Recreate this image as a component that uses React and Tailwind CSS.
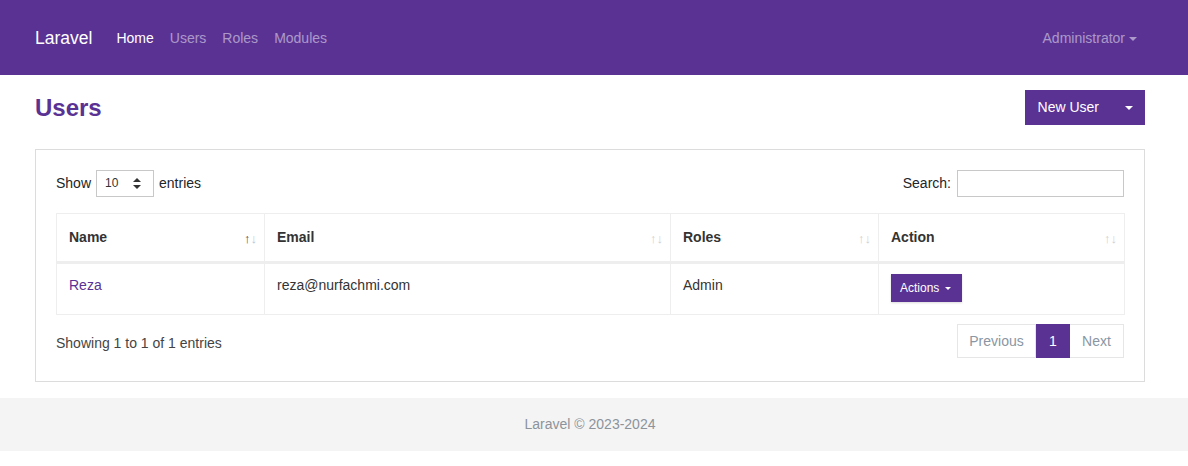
import React from "react";

function Caret({ size = 4, className = "" }) {
  return (
    <span
      className={"inline-block align-middle " + className}
      style={{
        width: 0,
        height: 0,
        borderLeft: `${size}px solid transparent`,
        borderRight: `${size}px solid transparent`,
        borderTop: `${size}px solid currentColor`,
      }}
    />
  );
}

function SortIcons({ active }) {
  return (
    <span className="absolute right-[7px] top-1/2 -translate-y-1/2 flex text-[13px] leading-none">
      <span className={active ? "text-[#5a4848]" : "text-[#cfcfcf]"}>↑</span>
      <span className={active ? "text-[#b9c6d6]" : "text-[#cfcfcf]"}>↓</span>
    </span>
  );
}

export default function App() {
  const th = "relative border border-[#eee] border-b-[3px] border-b-[#eee] px-3 py-3 text-left font-bold text-[#333] align-middle";
  const td = "border border-[#eee] px-3 py-3 align-top text-[#333]";
  return (
    <div className="min-h-[466px] bg-white font-['Liberation_Sans',Arial,sans-serif] text-[14px] leading-[21px] text-[#212529]">
      <nav className="h-[75px] bg-[#5a3294] pl-[35px] pr-[43px] pt-[2px] flex items-center">
        <span className="text-[17.5px] text-white mr-4">Laravel</span>
        <ul className="flex">
          <li className="px-2 text-white">Home</li>
          <li className="px-2 text-white/50">Users</li>
          <li className="px-2 text-white/50">Roles</li>
          <li className="px-2 text-white/50">Modules</li>
        </ul>
        <div className="ml-auto px-2 text-white/50 flex items-center gap-[4px]">
          <span>Administrator</span>
          <Caret size={4} className="mt-[1px]" />
        </div>
      </nav>

      <main className="pl-[35px] pr-[43px]">
        <div className="flex justify-between items-center pt-[15px]">
          <h1 className="text-[24px] font-bold text-[#5a3294] leading-[35px]">Users</h1>
          <div className="flex h-[35px] bg-[#5a3294] text-white">
            <span className="pl-[13px] pr-[13px] flex items-center">New User</span>
            <span className="w-[33px] flex items-center justify-center">
              <Caret size={4} />
            </span>
          </div>
        </div>

        <div className="mt-[24px] border border-[#dcdcdc] px-5 pt-5 pb-[23px]">
          <div className="flex justify-between items-center h-[27px]">
            <div className="flex items-center">
              <span className="mr-[5px]">Show</span>
              <div className="w-[58px] h-[27px] border border-[#c8c8c8] flex items-center justify-between pl-[8px] pr-[12px] text-[12px] text-[#333]">
                <span>10</span>
                <svg width="8" height="11" viewBox="0 0 8 11">
                  <path d="M4 0 L8 4 L0 4 Z" fill="#333" />
                  <path d="M0 7 L8 7 L4 11 Z" fill="#333" />
                </svg>
              </div>
              <span className="ml-[5px]">entries</span>
            </div>
            <div className="flex items-center">
              <span className="mr-[6px]">Search:</span>
              <div className="w-[167px] h-[27px] border border-[#c8c8c8]" />
            </div>
          </div>

          <table className="mt-4 w-full table-fixed border-collapse">
            <colgroup>
              <col style={{ width: 208 }} />
              <col style={{ width: 406 }} />
              <col style={{ width: 208 }} />
              <col style={{ width: 246 }} />
            </colgroup>
            <thead>
              <tr className="h-[49px]">
                <th className={th}>Name<SortIcons active /></th>
                <th className={th}>Email<SortIcons /></th>
                <th className={th}>Roles<SortIcons /></th>
                <th className={th}>Action<SortIcons /></th>
              </tr>
            </thead>
            <tbody>
              <tr>
                <td className={td + " !text-[#5a3294] pt-[11px]"}>Reza</td>
                <td className={td + " pt-[11px]"}>reza@nurfachmi.com</td>
                <td className={td + " pt-[11px]"}>Admin</td>
                <td className={td + " pt-[10px]"}>
                  <div className="inline-flex items-center gap-[6px] h-[28px] pl-[9px] pr-[11px] bg-[#5a3294] text-white text-[12px] shadow-[0_1px_2px_rgba(0,0,0,0.15)]">
                    <span>Actions</span>
                    <Caret size={3} />
                  </div>
                </td>
              </tr>
            </tbody>
          </table>

          <div className="flex justify-between items-center mt-[9px]">
            <span className="text-[#444] pt-[4px]">Showing 1 to 1 of 1 entries</span>
            <div className="flex h-[34px]">
              <span className="w-[79px] border border-[#e6e6e6] flex items-center justify-center text-[#8a96a3]">Previous</span>
              <span className="w-[34px] bg-[#5a3294] text-white flex items-center justify-center">1</span>
              <span className="w-[54px] border border-[#e6e6e6] border-l-0 flex items-center justify-center text-[#8a96a3]">Next</span>
            </div>
          </div>
        </div>
      </main>

      <footer className="mt-[16px] h-[53px] bg-[#f4f4f4] pr-[8px] flex items-center justify-center text-[#8c939b]">
        Laravel © 2023-2024
      </footer>
    </div>
  );
}
